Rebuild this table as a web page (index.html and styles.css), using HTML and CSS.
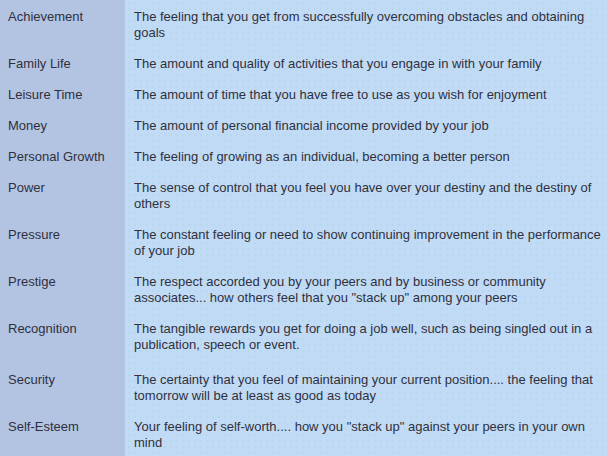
FILE: index.html
```html
<!DOCTYPE html>
<html>
<head>
<meta charset="utf-8">
<link rel="stylesheet" href="styles.css">
</head>
<body>
<table class="values">
  <tr><td class="term">Achievement</td><td class="desc">The feeling that you get from successfully overcoming obstacles and obtaining goals</td></tr>
  <tr><td class="term">Family Life</td><td class="desc">The amount and quality of activities that you engage in with your family</td></tr>
  <tr><td class="term">Leisure Time</td><td class="desc">The amount of time that you have free to use as you wish for enjoyment</td></tr>
  <tr><td class="term">Money</td><td class="desc">The amount of personal financial income provided by your job</td></tr>
  <tr><td class="term">Personal Growth</td><td class="desc">The feeling of growing as an individual, becoming a better person</td></tr>
  <tr><td class="term">Power</td><td class="desc">The sense of control that you feel you have over your destiny and the destiny of others</td></tr>
  <tr><td class="term">Pressure</td><td class="desc">The constant feeling or need to show continuing improvement in the performance of your job</td></tr>
  <tr><td class="term">Prestige</td><td class="desc">The respect accorded you by your peers and by business or community associates... how others feel that you "stack up" among your peers</td></tr>
  <tr class="tall"><td class="term">Recognition</td><td class="desc">The tangible rewards you get for doing a job well, such as being singled out in a publication, speech or event.</td></tr>
  <tr><td class="term">Security</td><td class="desc">The certainty that you feel of maintaining your current position.... the feeling that tomorrow will be at least as good as today</td></tr>
  <tr><td class="term">Self-Esteem</td><td class="desc">Your feeling of self-worth.... how you "stack up" against your peers in your own mind</td></tr>
</table>
</body>
</html>
```
FILE: styles.css
```css
html, body {
  margin: 0;
  padding: 0;
  height: 100%;
}
body {
  background-color: #c1dbf7;
  background-image:
    linear-gradient(to right, #b3c4e3 0, #b3c4e3 125px, transparent 125px),
    radial-gradient(circle, rgba(150, 210, 190, 0.35) 0.6px, transparent 0.9px);
  background-size: 100% 100%, 6px 6px;
  font-family: "Liberation Sans", Arial, sans-serif;
  font-size: 13px;
  color: #30303c;
  padding-top: 2px;
  box-sizing: border-box;
}
.values {
  border-collapse: collapse;
  width: 607px;
}
.values td {
  vertical-align: top;
  line-height: 16px;
  padding: 7px 9px 8px 9px;
}
.values .term {
  width: 125px;
  box-sizing: border-box;
  padding-left: 8px;
}
.values .desc {
  padding-left: 9px;
  padding-right: 2px;
}
.values .tall td {
  padding-bottom: 12px;
}
```
